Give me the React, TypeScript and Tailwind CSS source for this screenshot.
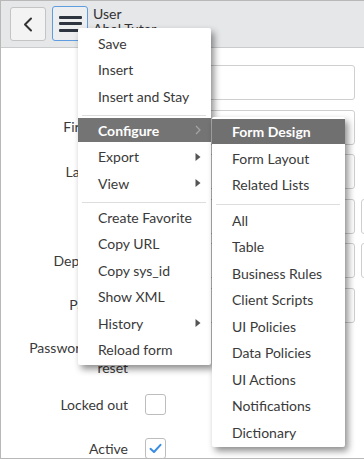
import React from "react";

const font = { fontFamily: "Lato, 'Open Sans', Arial, sans-serif" };

function Tri() {
  return (
    <svg width="6" height="9" viewBox="0 0 6 9" className="absolute right-[10px] top-1/2 -translate-y-1/2">
      <path d="M0.5 0.5 L5.5 4.5 L0.5 8.5 Z" fill="#555" />
    </svg>
  );
}

function Item({ label, tri }: { label: string; tri?: boolean }) {
  return (
    <div className="relative h-[26.5px] flex items-center pl-[20px] text-[14px] text-[#3a3a3a]">
      {label}
      {tri && <Tri />}
    </div>
  );
}

function Input({ extra }: { extra?: boolean }) {
  return (
    <div className="flex items-center gap-[6px]">
      <div className="w-[210px] h-[35px] shrink-0 rounded-[3px] border border-[#cfcfcf] bg-white" />
      {extra && <div className="w-[30px] h-[35px] shrink-0 rounded-[3px] border border-[#cfcfcf] bg-white" />}
    </div>
  );
}

function Row({ label, children, className }: { label: string; children: React.ReactNode; className?: string }) {
  return (
    <div className={"flex gap-[17px] " + (className ?? "items-center")}>
      <div className="w-[127px] shrink-0 text-right text-[14px] leading-[20px] text-[#3a3a3a]">{label}</div>
      {children}
    </div>
  );
}

function Box({ checked }: { checked?: boolean }) {
  return (
    <div className="w-[21px] h-[21px] shrink-0 rounded-[3px] border border-[#bdbdbd] bg-white flex items-center justify-center">
      {checked && (
        <svg width="13" height="11" viewBox="0 0 13 11">
          <path d="M1.5 5.8 L5 9 L11.5 1.8" fill="none" stroke="#3a8de2" strokeWidth="2" strokeLinecap="round" strokeLinejoin="round" />
        </svg>
      )}
    </div>
  );
}

export default function App() {
  return (
    <div className="relative w-[364px] h-[459px] overflow-hidden bg-white border-l border-t border-b border-[#b8b8b8]" style={font}>
      {/* header */}
      <div className="h-[47px] bg-[#e6e7e9] border-b border-[#c9cbcd] flex items-start pl-[9px] pt-[5px]">
        <div className="mt-[1px] w-[36px] h-[34px] rounded-[3px] border border-[#c4c4c4] bg-[#f3f3f3] flex items-center justify-center">
          <svg width="10" height="15" viewBox="0 0 10 15">
            <path d="M8 1.5 L2 7.5 L8 13.5" fill="none" stroke="#333" strokeWidth="2" strokeLinecap="round" strokeLinejoin="round" />
          </svg>
        </div>
        <div className="ml-[6px] w-[36px] h-[35px] rounded-[3px] border-[1.5px] border-[#5f9de0] bg-[#eceef0] flex flex-col items-center justify-center gap-[3.5px]">
          <div className="w-[23px] h-[3px] rounded-[1px] bg-[#2d3640]" />
          <div className="w-[23px] h-[3px] rounded-[1px] bg-[#2d3640]" />
          <div className="w-[23px] h-[3px] rounded-[1px] bg-[#2d3640]" />
        </div>
        <div className="ml-[5px] flex flex-col text-[14px] leading-[15px] text-[#333]">
          <span>User</span>
          <span>Abel Tuter</span>
        </div>
      </div>

      {/* form */}
      <div className="flex flex-col pt-[17px]">
        <Row label="User ID"><Input /></Row>
        <Row label="First name" className="items-center mt-[9.5px]"><Input /></Row>
        <Row label="Last name" className="items-center mt-[9.5px]"><Input /></Row>
        <Row label="Title" className="items-center mt-[9.5px]"><Input extra /></Row>
        <Row label="Department" className="items-center mt-[9.5px]"><Input extra /></Row>
        <Row label="Password" className="items-center mt-[9.5px]"><Input /></Row>
        <Row label="Password needs reset" className="items-start mt-[15.5px]"><Box /></Row>
        <Row label="Locked out" className="items-center mt-[16px]"><Box /></Row>
        <Row label="Active" className="items-center mt-[23px]"><Box checked /></Row>
      </div>

      {/* main menu */}
      <div className="absolute left-[77px] top-[27px] w-[133px] bg-white rounded-[2px] pt-[2px] pb-[2px] shadow-[3px_4px_7px_rgba(0,0,0,0.45)]">
        <Item label="Save" />
        <Item label="Insert" />
        <Item label="Insert and Stay" />
        <div className="h-[7.5px] flex flex-col justify-end pb-[1px] pl-[4px] pr-[5px]">
          <div className="h-px bg-[#dddddd]" />
        </div>
        <div className="relative h-[26.5px] flex items-center">
          <div className="w-full h-[24px] bg-[#747474] flex items-center pl-[20px] text-[14px] font-bold text-white">Configure</div>
          <svg width="6" height="10" viewBox="0 0 6 10" className="absolute right-[10px] top-1/2 -translate-y-1/2">
            <path d="M1 1 L5 5 L1 9" fill="none" stroke="#a5a5a5" strokeWidth="1.2" />
          </svg>
        </div>
        <Item label="Export" tri />
        <Item label="View" tri />
        <div className="h-[7.25px] flex flex-col justify-end pb-[1px] pl-[4px] pr-[5px]">
          <div className="h-px bg-[#dddddd]" />
        </div>
        <Item label="Create Favorite" />
        <Item label="Copy URL" />
        <Item label="Copy sys_id" />
        <Item label="Show XML" />
        <Item label="History" tri />
        <Item label="Reload form" />
      </div>

      {/* submenu */}
      <div className="absolute left-[211px] top-[116px] w-[133px] bg-white rounded-[2px] pt-[1.5px] pb-[1px] shadow-[3px_4px_7px_rgba(0,0,0,0.45)]">
        <div className="h-[26.5px] flex items-center">
          <div className="w-full h-[25px] bg-[#707070] flex items-center pl-[20px] text-[14px] font-bold text-white">Form Design</div>
        </div>
        <Item label="Form Layout" />
        <Item label="Related Lists" />
        <div className="h-[9px] flex flex-col justify-end pb-[2px] pl-[4px] pr-[5px]">
          <div className="h-px bg-[#dddddd]" />
        </div>
        <Item label="All" />
        <Item label="Table" />
        <Item label="Business Rules" />
        <Item label="Client Scripts" />
        <Item label="UI Policies" />
        <Item label="Data Policies" />
        <Item label="UI Actions" />
        <Item label="Notifications" />
        <Item label="Dictionary" />
      </div>
    </div>
  );
}
